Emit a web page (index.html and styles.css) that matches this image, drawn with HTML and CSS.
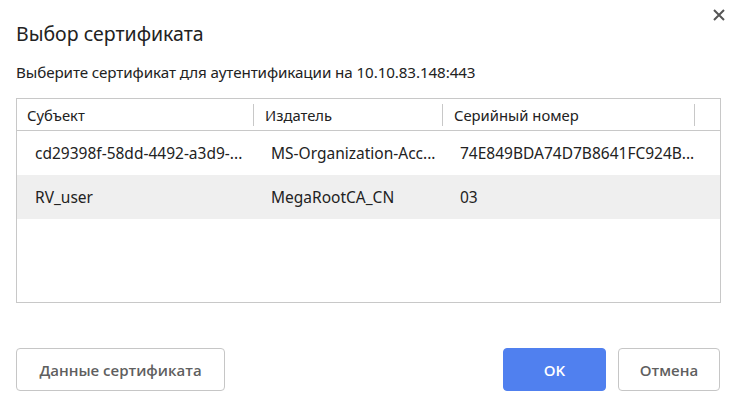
FILE: index.html
```html
<!DOCTYPE html>
<html lang="ru">
<head>
<meta charset="utf-8">
<link rel="stylesheet" href="styles.css">
</head>
<body>
<div class="dialog">
  <div class="head">
    <h1 class="title">Выбор сертификата</h1>
    <button class="close" aria-label="Закрыть">
      <svg width="12" height="12" viewBox="0 0 12 12"><path d="M1 1L11 11M11 1L1 11" stroke="#555" stroke-width="2"/></svg>
    </button>
  </div>
  <p class="subtitle">Выберите сертификат для аутентификации на 10.10.83.148:443</p>
  <div class="table">
    <div class="thead">
      <div class="th c1">Субъект</div>
      <div class="th c2">Издатель</div>
      <div class="th c3">Серийный номер</div>
      <div class="th c4"></div>
    </div>
    <div class="row">
      <div class="td c1">cd29398f-58dd-4492-a3d9-...</div>
      <div class="td c2">MS-Organization-Acc...</div>
      <div class="td c3">74E849BDA74D7B8641FC924B...</div>
    </div>
    <div class="row alt">
      <div class="td c1">RV_user</div>
      <div class="td c2">MegaRootCA_CN</div>
      <div class="td c3">03</div>
    </div>
  </div>
  <div class="actions">
    <button class="btn">Данные сертификата</button>
    <div class="spacer"></div>
    <button class="btn primary">OK</button>
    <button class="btn">Отмена</button>
  </div>
</div>
</body>
</html>
```
FILE: styles.css
```css
* { box-sizing: border-box; }
html, body { margin: 0; padding: 0; background: #fff; }
body { font-family: "Noto Sans", "Open Sans", sans-serif; color: #222; }
.dialog { width: 740px; height: 408px; padding: 0 20px 0 16px; display: flex; flex-direction: column; }
.head { display: flex; align-items: flex-start; justify-content: space-between; height: 58px; }
.title { margin: 21px 0 0 0; font-size: 19.5px; font-weight: 400; line-height: 26px; color: #222; }
.close { margin: 9px -5px 0 0; border: 0; background: none; padding: 0; width: 12px; height: 12px; }
.subtitle { margin: 0; font-size: 15.2px; line-height: 28px; color: #222; height: 40px; letter-spacing: -0.1px; }
.table { width: 705px; height: 205px; border: 1px solid #c8c8c8; }
.thead { display: flex; height: 32px; border-bottom: 1px solid #c8c8c8; align-items: center; font-size: 14.8px; }
.th { height: 22px; line-height: 22px; padding-left: 10px; color: #222; }
.th.c2, .th.c3, .th.c4 { border-left: 1px solid #c8c8c8; padding-left: 11px; }
.c1 { width: 236px; }
.c2 { width: 189px; }
.c3 { width: 252px; }
.c4 { flex: 1; }
.row { display: flex; height: 44px; align-items: center; font-size: 15.5px; }
.row.alt { background: #efefef; }
.td { padding-left: 18px; white-space: nowrap; overflow: hidden; color: #222; }
.td.c2, .td.c3 { padding-left: 18px; }
.actions { display: flex; margin-top: 45px; gap: 12px; }
.spacer { flex: 1; }
.btn { height: 43px; border: 1px solid #c6c6c6; border-radius: 4px; background: #fff; font-family: "Open Sans", sans-serif; font-weight: 600; font-size: 15px; color: #5f5f5f; padding: 0; }
.btn:first-child { width: 209px; }
.btn.primary { width: 103px; background: #5080ef; border-color: #5080ef; color: #fff; }
.btn:last-child { width: 102px; }
```
